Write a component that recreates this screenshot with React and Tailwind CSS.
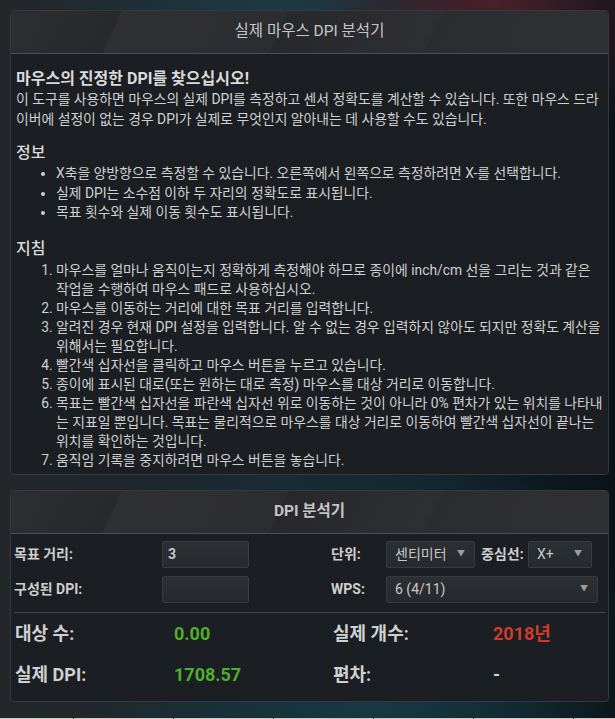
import React from "react";

const font = "font-['Roboto','Noto_Sans_CJK_KR',sans-serif]";

function PanelHeader({ children }) {
    return (
        <div className="h-[43px] flex items-center justify-center border-b border-[#4b4e53] rounded-t-[4px] bg-[linear-gradient(115deg,#2c2e32_0%,#27292d_18%,#2e3034_18%,#2b2d31_45%,#26282c_45%,#2d2f33_70%,#2a2c30_70%,#2f3135_100%)] text-[15.5px] text-[#c6c6c6]">
            {children}
        </div>
    );
}

function Select({ value, className }) {
    return (
        <div
            className={`h-[27px] flex items-center justify-between pl-[8px] pr-[9px] rounded-[2px] border border-[#383b40] bg-[linear-gradient(#2c2f33,#26292d)] text-[14px] text-[#c8c8c8] ${className}`}
        >
            <span>{value}</span>
            <span className="text-[8px] text-[#9c9c9c]">▼</span>
        </div>
    );
}

function Input({ value }) {
    return (
        <div className="w-[87px] h-[27px] flex items-center pl-[5px] rounded-[2px] border border-[#383b40] bg-[linear-gradient(#2c2f33,#26292d)] text-[14px] text-[#c8c8c8]">
            {value}
        </div>
    );
}

export default function App() {
    const bullets = [
        "X축을 양방향으로 측정할 수 있습니다. 오른쪽에서 왼쪽으로 측정하려면 X-를 선택합니다.",
        "실제 DPI는 소수점 이하 두 자리의 정확도로 표시됩니다.",
        "목표 횟수와 실제 이동 횟수도 표시됩니다.",
    ];
    const steps = [
        "마우스를 얼마나 움직이는지 정확하게 측정해야 하므로 종이에 inch/cm 선을 그리는 것과 같은 작업을 수행하여 마우스 패드로 사용하십시오.",
        "마우스를 이동하는 거리에 대한 목표 거리를 입력합니다.",
        "알려진 경우 현재 DPI 설정을 입력합니다. 알 수 없는 경우 입력하지 않아도 되지만 정확도 계산을 위해서는 필요합니다.",
        "빨간색 십자선을 클릭하고 마우스 버튼을 누르고 있습니다.",
        "종이에 표시된 대로(또는 원하는 대로 측정) 마우스를 대상 거리로 이동합니다.",
        "목표는 빨간색 십자선을 파란색 십자선 위로 이동하는 것이 아니라 0% 편차가 있는 위치를 나타내는 지표일 뿐입니다. 목표는 물리적으로 마우스를 대상 거리로 이동하여 빨간색 십자선이 끝나는 위치를 확인하는 것입니다.",
        "움직임 기록을 중지하려면 마우스 버튼을 놓습니다.",
    ];

    return (
        <div
            className={`${font} w-[615px] h-[719px] overflow-hidden flex flex-col pt-[10px] pl-[10px] pr-[6px] bg-[radial-gradient(circle_at_80%_0%,#4a2027_0%,transparent_20%),radial-gradient(circle_at_45%_0%,#1d3a44_0%,transparent_30%),radial-gradient(circle_at_60%_95%,#163a44_0%,transparent_35%),linear-gradient(90deg,#24272a_0%,#1a2830_45%,#122129_70%,#0b1318_100%)]`}
        >
            {/* 🟦 Info panel */}
            <section className="rounded-[4px] border border-[#35383d] bg-[#1b1e22]">
                <PanelHeader>실제 마우스 DPI 분석기</PanelHeader>
                <div className="pt-[14px] pb-[4px] pl-[5px] pr-[4px] text-[13.85px] leading-[19.5px] text-[#d0d0d0] break-all">
                    <h2 className="text-[16px] leading-[22px] font-bold text-[#dadada]">
                        마우스의 진정한 DPI를 찾으십시오!
                    </h2>
                    <p>
                        이 도구를 사용하면 마우스의 실제 DPI를 측정하고 센서 정확도를 계산할 수 있습니다. 또한 마우스 드라이버에 설정이 없는 경우 DPI가 실제로 무엇인지 알아내는 데 사용할 수도 있습니다.
                    </p>

                    <h3 className="mt-[13px] text-[16px] leading-[22px] font-medium text-[#dadada]">
                        정보
                    </h3>
                    <ul className="list-disc pl-[40px]">
                        {bullets.map((b) => (
                            <li key={b}>{b}</li>
                        ))}
                    </ul>

                    <h3 className="mt-[14px] text-[16px] leading-[24px] font-medium text-[#dadada]">
                        지침
                    </h3>
                    <ol className="list-decimal pl-[40px] leading-[19px]">
                        {steps.map((s) => (
                            <li key={s}>{s}</li>
                        ))}
                    </ol>
                </div>
            </section>

            {/* 🟩 Analyzer panel */}
            <section className="mt-[15px] rounded-[4px] border border-[#35383d] bg-[#1b1e22]">
                <PanelHeader>
                    <span className="font-bold">DPI 분석기</span>
                </PanelHeader>

                <div className="pt-[7px] pl-[3px] flex flex-col gap-[8px] text-[14px] font-bold text-[#cfcfcf]">
                    <div className="flex items-center">
                        <span className="w-[148px]">목표 거리:</span>
                        <Input value="3" />
                        <span className="w-[82px]" />
                        <span className="w-[55px]">단위:</span>
                        <Select value="센티미터" className="w-[89px] font-normal" />
                        <span className="w-[53px] pl-[6px]">중심선:</span>
                        <Select value="X+" className="w-[64px] font-normal" />
                    </div>
                    <div className="flex items-center">
                        <span className="w-[148px]">구성된 DPI:</span>
                        <Input value="" />
                        <span className="w-[82px]" />
                        <span className="w-[55px]">WPS:</span>
                        <Select value="6 (4/11)" className="w-[212px] font-normal" />
                    </div>
                </div>

                <div className="mt-[9px] mx-[3px] border-t border-[#45484d]" />

                <div className="pl-[4px] pb-[6px] text-[18px] font-bold">
                    <div className="h-[41px] flex items-center">
                        <span className="w-[159px] text-[#d0d0d0]">대상 수:</span>
                        <span className="w-[159px] text-[#4fae2d]">0.00</span>
                        <span className="w-[160px] text-[#d0d0d0]">실제 개수:</span>
                        <span className="text-[#d23b2b]">2018년</span>
                    </div>
                    <div className="h-[41px] flex items-center">
                        <span className="w-[159px] text-[#d0d0d0]">실제 DPI:</span>
                        <span className="w-[159px] text-[#4fae2d]">1708.57</span>
                        <span className="w-[160px] text-[#d0d0d0]">편차:</span>
                        <span className="text-[#d0d0d0]">-</span>
                    </div>
                </div>
            </section>

            {/* table edge peeking at the bottom */}
            <div className="mt-auto -ml-[10px] -mr-[6px] h-[1px] grid grid-cols-[73px_100px_100px_100px_100px_100px_42px] bg-[#c9c9c9]">
                <span />
                <span className="border-l border-[#333]" />
                <span className="border-l border-[#333]" />
                <span className="border-l border-[#333]" />
                <span className="border-l border-[#333]" />
                <span className="border-l border-[#333]" />
                <span className="border-l border-[#333]" />
            </div>
        </div>
    );
}
